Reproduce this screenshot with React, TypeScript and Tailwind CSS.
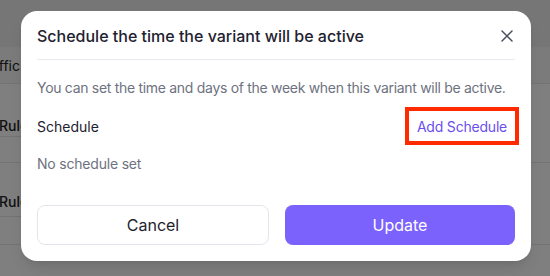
import React from "react";

export default function App() {
  return (
    <div className="relative w-[550px] h-[276px] overflow-hidden bg-white" style={{ fontFamily: "Inter, 'Noto Sans', sans-serif" }}>
      {/* Background page */}
      <div className="flex flex-col w-full h-full">
        <div className="h-[47px] bg-[#ededed]" />
        <div className="h-[36px] bg-[#f6f6f6] flex">
          <div className="w-[20px] overflow-hidden flex justify-end items-center">
            <span className="whitespace-nowrap text-[14px] text-[#222]">Traffic</span>
          </div>
        </div>
        <div className="h-[54px] flex border-t border-[#e6e6e6]">
          <div className="w-[21px] flex items-end pb-[0px] border-b border-[#e6e6e6]">
            <span className="whitespace-nowrap text-[14px] font-medium text-[#222] ml-[-1px]">Rule</span>
          </div>
        </div>
        <div className="h-[26px] border-b border-[#e6e6e6]" />
        <div className="h-[54px] flex">
          <div className="w-[21px] flex items-end pb-[4px] border-b border-[#e6e6e6]">
            <span className="whitespace-nowrap text-[14px] font-medium text-[#222] ml-[-1px]">Rule</span>
          </div>
        </div>
        <div className="h-[28px] border-b border-[#e6e6e6]" />
      </div>
      {/* Overlay */}
      <div className="absolute inset-0 bg-black/50" />
      {/* Modal */}
      <div className="absolute left-[21px] top-[11px] w-[510px] h-[250px] bg-white rounded-[16px] shadow-lg flex flex-col px-4">
        <div className="flex items-center justify-between h-[49px] border-b border-[#e8e9ee] pt-[2px]">
          <span className="text-[16px] font-medium text-[#1e2230]">Schedule the time the variant will be active</span>
          <svg width="12" height="12" viewBox="0 0 12 12" className="mr-[2px]">
            <path d="M1 1L11 11M11 1L1 11" stroke="#4b5060" strokeWidth="1.5" strokeLinecap="round" />
          </svg>
        </div>
        <div className="pt-[18px] text-[14px] tracking-[-0.3px] whitespace-nowrap text-[#6e7280] leading-[20px]">
          You can set the time and days of the week when this variant will be active.
        </div>
        <div className="flex items-center justify-between mt-[10px] h-[36px]">
          <span className="text-[14px] text-[#1e2230]">Schedule</span>
          <div className="relative flex items-center justify-center w-[114px] h-[38px] border-[4px] border-[#ff2a00] mr-[-4px]">
            <span className="text-[14px] tracking-[-0.2px] text-[#6a4ff0]">Add Schedule</span>
          </div>
        </div>
        <div className="mt-[10px] text-[14px] text-[#6e7280] leading-[20px] tracking-[-0.2px]">No schedule set</div>
        <div className="flex gap-4 mt-[31px]">
          <button className="flex-1 h-[40px] rounded-[8px] border border-[#e3e5ec] bg-white text-[16px] text-[#1e2230]">Cancel</button>
          <button className="flex-1 h-[40px] rounded-[8px] bg-[#7b62fc] text-[16px] text-white">Update</button>
        </div>
      </div>
    </div>
  );
}
